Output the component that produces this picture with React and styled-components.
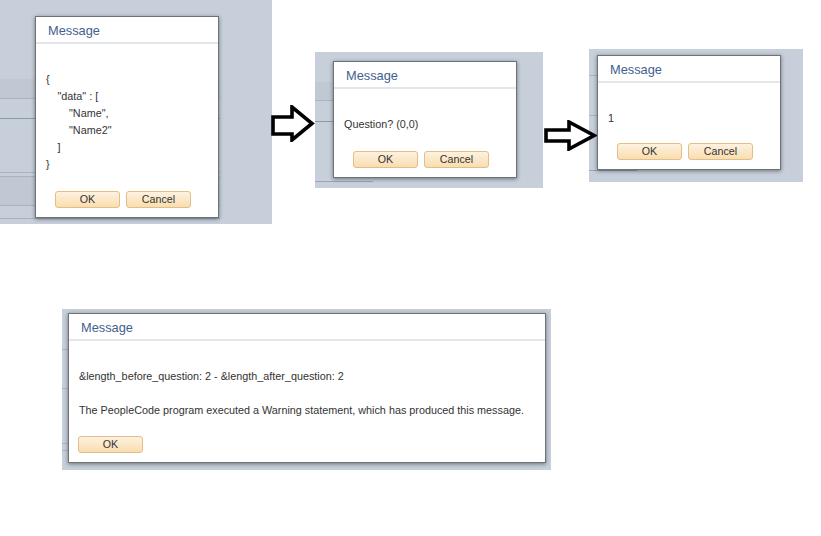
import React from 'react';
import styled, { createGlobalStyle } from 'styled-components';

const GlobalStyle = createGlobalStyle`
  html, body {
    margin: 0;
    padding: 0;
    background: #fff;
  }
  body {
    font-family: 'Liberation Sans', Arial, sans-serif;
  }
`;

// hard-edged horizontal stripes for the greyed-out page behind each dialog
const stripes = (list) => {
  const stops = ['transparent 0px'];
  list.forEach(([y, h, c]) => {
    stops.push(`transparent ${y}px`, `${c} ${y}px`, `${c} ${y + h}px`, `transparent ${y + h}px`);
  });
  return `linear-gradient(to bottom, ${stops.join(', ')})`;
};

const Page = styled.div`
  width: 821px;
  height: 536px;
  overflow: hidden;
`;

const TopRow = styled.div`
  display: flex;
  align-items: flex-start;
`;

const BottomRow = styled.div`
  display: flex;
  margin-top: 85px;
  padding-left: 62px;
`;

const Backdrop = styled.div`
  box-sizing: border-box;
  flex: none;
  width: ${(p) => p.$w}px;
  height: ${(p) => p.$h}px;
  margin-top: ${(p) => p.$top || 0}px;
  padding: ${(p) => p.$pt}px 0 0 ${(p) => p.$pl}px;
  background-color: #c6cfda;
  background-image: ${(p) => p.$lines};
  background-size: ${(p) => p.$sw}px 100%;
  background-repeat: no-repeat;
`;

const Dialog = styled.div`
  box-sizing: border-box;
  width: ${(p) => p.$w}px;
  background: #fff;
  border: 1px solid #6e7378;
  box-shadow: 0 1px 4px rgba(0, 0, 0, 0.45);
`;

const Header = styled.div`
  height: 25px;
  padding-left: 12px;
  border-bottom: 2px solid #e3e6eb;
  font-size: 12.8px;
  line-height: 27px;
  color: #41618f;
`;

const Body = styled.div`
  padding: 10px 10px 0;
  font-size: 10.8px;
  line-height: 17px;
  color: #333;
`;

const Line = styled.div`
  min-height: 17px;
  padding-left: ${(p) => p.$indent * 11.5}px;
  white-space: pre;
`;

const Actions = styled.div`
  display: flex;
  gap: 6px;
  padding: ${(p) => p.$gap}px 0 9px ${(p) => p.$inset}px;
`;

const Button = styled.button`
  box-sizing: border-box;
  width: 65px;
  height: 17px;
  padding: 0;
  border: 1px solid #e2bf88;
  border-radius: 3px;
  background: linear-gradient(#fdf2df, #f9ddb0);
  font-family: 'Liberation Sans', Arial, sans-serif;
  font-size: 10.7px;
  line-height: 15px;
  color: #333;
`;

const ArrowBox = styled.svg`
  position: relative;
  z-index: 1;
  flex: none;
  margin-top: ${(p) => p.$top}px;
  margin-left: ${(p) => p.$ml}px;
  margin-right: ${(p) => p.$mr}px;
`;

const Arrow = ({ w, h, shaft, headX, top, ml, mr }) => (
  <ArrowBox width={w} height={h} viewBox={`0 0 ${w} ${h}`} $top={top} $ml={ml} $mr={mr}>
    <polygon
      points={`2,${shaft[0]} ${headX},${shaft[0]} ${headX},2 ${w - 3},${h / 2} ${headX},${h - 2} ${headX},${shaft[1]} 2,${shaft[1]}`}
      fill="#fff"
      stroke="#000"
      strokeWidth="3.6"
      strokeLinejoin="miter"
    />
  </ArrowBox>
);

const MessageBox = ({ width, lines, buttons, inset, gap = 18 }) => (
  <Dialog $w={width}>
    <Header>Message</Header>
    <Body>
      {lines.map(([text, indent], i) => (
        <Line key={i} $indent={indent}>{text}</Line>
      ))}
    </Body>
    <Actions $inset={inset} $gap={gap}>
      {buttons.map((b) => (
        <Button key={b}>{b}</Button>
      ))}
    </Actions>
  </Dialog>
);

const App = () => {
  return (
    <Page>
      <GlobalStyle />
      <TopRow>
        <Backdrop
          $w={272}
          $h={224}
          $pt={16}
          $pl={35}
          $sw={220}
          $lines={stripes([
            [79, 19, '#bfc8d3'],
            [98, 1, '#aab3bf'],
            [118, 1, '#8f9aa7'],
            [172, 1, '#a9b2be'],
            [176, 1, '#a9b2be'],
            [177, 28, '#bfc8d3'],
            [205, 1, '#a9b2be'],
            [218, 1, '#a9b2be'],
          ])}
        >
          <MessageBox
            width={184}
            inset={19}
            buttons={['OK', 'Cancel']}
            lines={[
              ['', 0],
              ['{', 0],
              ['"data" : [', 1],
              ['"Name",', 2],
              ['"Name2"', 2],
              [']', 1],
              ['}', 0],
            ]}
          />
        </Backdrop>

        <Arrow w={44} h={37} shaft={[12, 29]} headX={21} top={105} ml={-1} mr={0} />

        <Backdrop
          $w={228}
          $h={136}
          $top={52}
          $pt={9}
          $pl={18}
          $sw={58}
          $lines={stripes([
            [30, 18, '#bfc8d3'],
            [48, 1, '#aab3bf'],
            [69, 1, '#8f9aa7'],
            [129, 1, '#9aa4b0'],
          ])}
        >
          <MessageBox
            width={184}
            inset={19}
            buttons={['OK', 'Cancel']}
            lines={[['', 0], ['Question? (0,0)', 0]]}
          />
        </Backdrop>

        <Arrow w={53} h={31} shaft={[10, 21]} headX={25} top={120} ml={1} mr={-8} />

        <Backdrop
          $w={214}
          $h={133}
          $top={49}
          $pt={6}
          $pl={8}
          $sw={48}
          $lines={stripes([
            [26, 1, '#aab3bf'],
            [66, 1, '#aab3bf'],
            [121, 1, '#9aa4b0'],
          ])}
        >
          <MessageBox
            width={184}
            inset={19}
            gap={16}
            buttons={['OK', 'Cancel']}
            lines={[['', 0], ['1', 0]]}
          />
        </Backdrop>
      </TopRow>

      <BottomRow>
        <Backdrop
          $w={489}
          $h={161}
          $pt={4}
          $pl={6}
          $sw={194}
          $lines={stripes([
            [40, 1, '#aab3bf'],
            [79, 1, '#aab3bf'],
            [134, 1, '#aab3bf'],
            [141, 1, '#aab3bf'],
          ])}
        >
          <MessageBox
            width={478}
            inset={9}
            gap={17}
            buttons={['OK']}
            lines={[
              ['', 0],
              ['&length_before_question: 2 - &length_after_question: 2', 0],
              ['', 0],
              ['The PeopleCode program executed a Warning statement, which has produced this message.', 0],
            ]}
          />
        </Backdrop>
      </BottomRow>
    </Page>
  );
};

export default App;
